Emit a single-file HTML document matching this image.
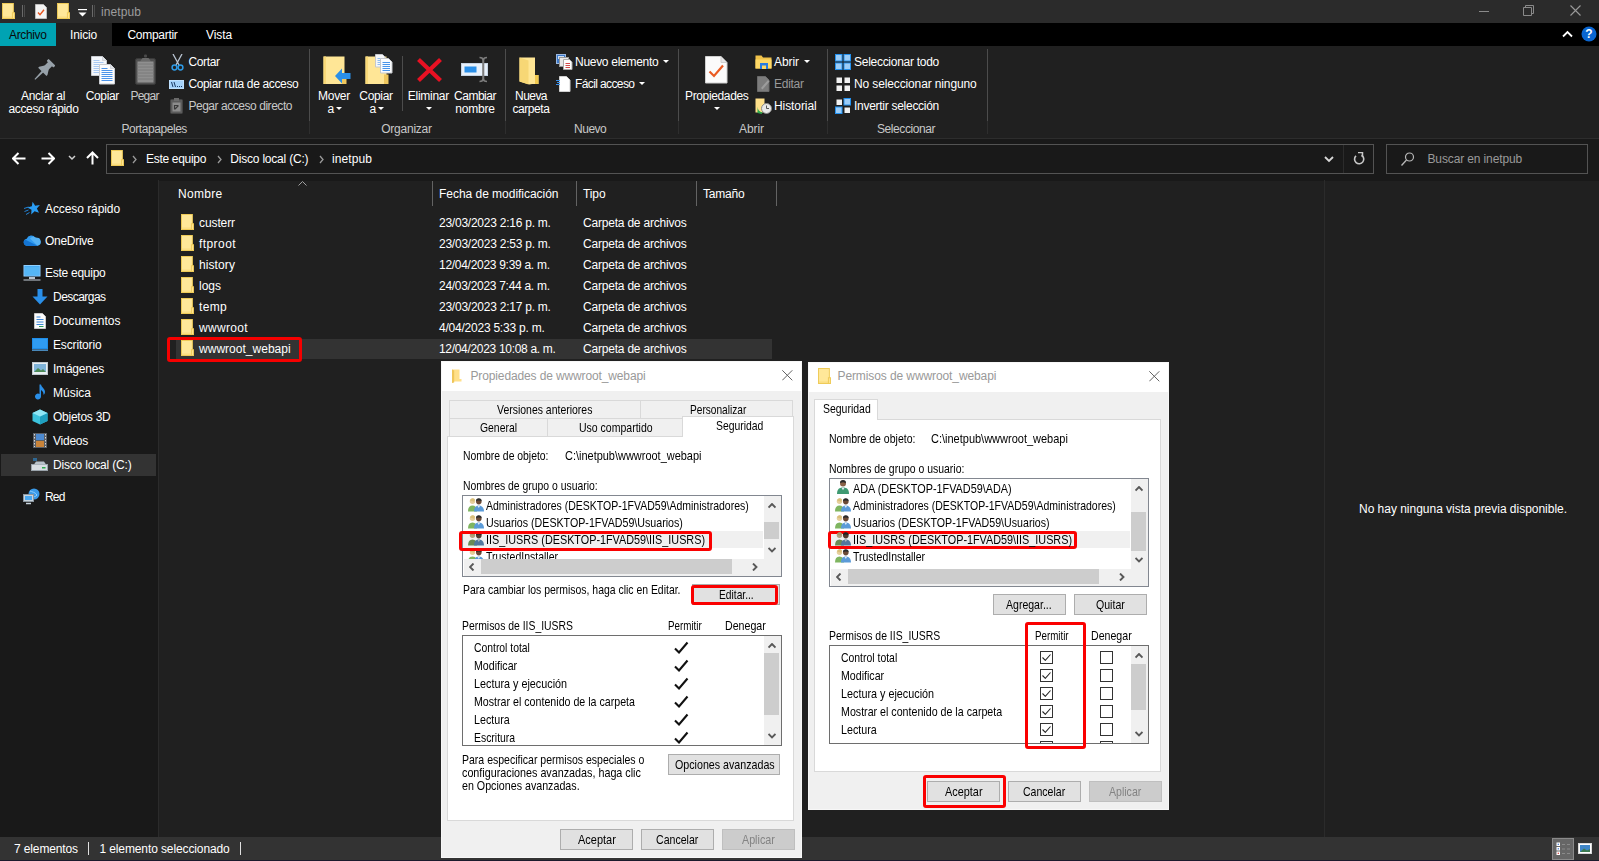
<!DOCTYPE html>
<html lang="es"><head><meta charset="utf-8"><title>inetpub</title>
<style>

html,body{margin:0;padding:0;background:#202020;}
body{width:1599px;height:861px;overflow:hidden;}
#root{position:relative;width:1599px;height:861px;overflow:hidden;background:#202020;
 font-family:"Liberation Sans",sans-serif;font-size:12px;color:#fff;}
.a{position:absolute;display:block;}
.t{white-space:pre;}

</style></head>
<body>
<div id="root">
<div class="a" style="left:0px;top:0px;width:1599px;height:23px;background:#2b2b2b;"></div>
<svg class="a" style="left:2px;top:3px;" width="13" height="16" viewBox="0 0 13.5 15.5" preserveAspectRatio="none"><path d="M0.500 0.500h11.300v14.500h-11.300z" fill="#ffe899" stroke="#efcb58"/><path d="M1 13h10.300v1.500h-10.300z" fill="#fbde84"/><path d="M10.800 9.500h2.200v5.500h-2.200z" fill="#ffe491" stroke="#efcb58"/></svg>
<div class="a" style="left:22px;top:5px;width:1px;height:12px;background:#6a6a6a;"></div>
<div class="a" style="left:24px;top:5px;width:1px;height:12px;background:#4a4a4a;"></div>
<svg class="a" style="left:35px;top:4px;" width="12" height="15" viewBox="0 0 12 15" preserveAspectRatio="none"><path d="M0.5 0.5h8l3 3v11h-11z" fill="#f4f4f4" stroke="#bdbdbd"/><path d="M3 8.5l2 2.2l4-5" fill="none" stroke="#e8541e" stroke-width="1.4"/></svg>
<svg class="a" style="left:57px;top:3px;" width="13" height="16" viewBox="0 0 13.5 15.5" preserveAspectRatio="none"><path d="M0.500 0.500h11.300v14.500h-11.300z" fill="#ffe899" stroke="#efcb58"/><path d="M1 13h10.300v1.500h-10.300z" fill="#fbde84"/><path d="M10.800 9.500h2.200v5.500h-2.200z" fill="#ffe491" stroke="#efcb58"/></svg>
<svg class="a" style="left:78px;top:9px;" width="9" height="8" viewBox="0 0 9 8" preserveAspectRatio="none"><path d="M0 0.5h9" stroke="#fff" stroke-width="1.4"/><path d="M0.5 3.5h8l-4 4z" fill="#fff"/></svg>
<div class="a" style="left:92px;top:5px;width:1px;height:12px;background:#6a6a6a;"></div>
<div class="a" style="left:94px;top:5px;width:1px;height:12px;background:#4a4a4a;"></div>
<span class="a t" style="left:101.00px;top:3.50px;line-height:16px;font-size:12px;color:#9d9d9d;letter-spacing:0.090px;">inetpub</span>
<div class="a" style="left:1479px;top:11px;width:10px;height:1px;background:#8a8a8a;"></div>
<svg class="a" style="left:1523px;top:5px;" width="11" height="11" viewBox="0 0 11 11" preserveAspectRatio="none"><path d="M0.5 2.5h8v8h-8z M2.5 2.5v-2h8v8h-2" fill="none" stroke="#8a8a8a"/></svg>
<svg class="a" style="left:1570px;top:5px;" width="11" height="11" viewBox="0 0 11 11" preserveAspectRatio="none"><path d="M0.5 0.5l10 10M10.5 0.5l-10 10" stroke="#9a9a9a" stroke-width="1.1"/></svg>
<div class="a" style="left:0px;top:23px;width:1599px;height:23px;background:#000;"></div>
<div class="a" style="left:0px;top:23px;width:56px;height:23px;background:#00a3b3;"></div>
<span class="a t" style="left:9.00px;top:26.50px;line-height:16px;font-size:12px;color:#0a0a0a;letter-spacing:-0.359px;">Archivo</span>
<div class="a" style="left:56px;top:23px;width:56px;height:24px;background:#202020;"></div>
<span class="a t" style="left:70.00px;top:26.50px;line-height:16px;font-size:12px;color:#fff;letter-spacing:-0.169px;">Inicio</span>
<span class="a t" style="left:127.50px;top:26.50px;line-height:16px;font-size:12px;color:#fff;letter-spacing:-0.297px;">Compartir</span>
<span class="a t" style="left:206.00px;top:26.50px;line-height:16px;font-size:12px;color:#fff;letter-spacing:-0.092px;">Vista</span>
<svg class="a" style="left:1562px;top:30px;" width="11" height="8" viewBox="0 0 11 8" preserveAspectRatio="none"><path d="M1 6.5l4.5-4.5l4.5 4.5" fill="none" stroke="#fff" stroke-width="1.8"/></svg>
<svg class="a" style="left:1581px;top:26px;" width="16" height="16" viewBox="0 0 16 16" preserveAspectRatio="none"><circle cx="8" cy="8" r="7.5" fill="#0a66d1"/><text x="8" y="12.3" text-anchor="middle" font-family="Liberation Sans, sans-serif" font-weight="bold" font-size="12" fill="#fff">?</text></svg>
<div class="a" style="left:0px;top:46px;width:1599px;height:92px;background:#202020;"></div>
<div class="a" style="left:0px;top:138px;width:1599px;height:1px;background:#2d2d2d;"></div>
<div class="a" style="left:309px;top:49px;width:1px;height:72px;background:#4c4c4c;"></div>
<div class="a" style="left:309px;top:121px;width:1px;height:13px;background:#2e2e2e;"></div>
<div class="a" style="left:505px;top:49px;width:1px;height:72px;background:#4c4c4c;"></div>
<div class="a" style="left:505px;top:121px;width:1px;height:13px;background:#2e2e2e;"></div>
<div class="a" style="left:678px;top:49px;width:1px;height:72px;background:#4c4c4c;"></div>
<div class="a" style="left:678px;top:121px;width:1px;height:13px;background:#2e2e2e;"></div>
<div class="a" style="left:827px;top:49px;width:1px;height:72px;background:#4c4c4c;"></div>
<div class="a" style="left:827px;top:121px;width:1px;height:13px;background:#2e2e2e;"></div>
<div class="a" style="left:987px;top:49px;width:1px;height:72px;background:#4c4c4c;"></div>
<div class="a" style="left:987px;top:121px;width:1px;height:13px;background:#2e2e2e;"></div>
<div class="a" style="left:402px;top:56px;width:1px;height:55px;background:#4c4c4c;"></div>
<svg class="a" style="left:30px;top:56px;" width="28" height="28" viewBox="0 0 28 28" preserveAspectRatio="none"><g fill="#98a2aa" transform="translate(13.900,14.300) rotate(45) scale(0.880)"><rect x="-5.500" y="-13" width="11" height="3.200" rx="1"/><rect x="-3.300" y="-10.500" width="6.600" height="8"/><path d="M-3.300 -4.500l-3.400 5.500v1.500h13.400v-1.500l-3.400-5.500z"/><path d="M-1.300 2h2.600l-0.700 12.500h-1.200z"/></g></svg>
<span class="a t" style="left:21.00px;top:88.00px;line-height:16px;font-size:12px;color:#fff;letter-spacing:-0.299px;">Anclar al</span>
<span class="a t" style="left:8.50px;top:101.00px;line-height:16px;font-size:12px;color:#fff;letter-spacing:-0.363px;">acceso rápido</span>
<svg class="a" style="left:91px;top:56px;" width="25" height="29" viewBox="0 0 25 29" preserveAspectRatio="none"><path d="M0.500 0.500h11l4 4v15h-15z" fill="#f4f7fb" stroke="#c9ccd1"/><path d="M11.500 0.500v4h4" fill="#dfe3e8" stroke="#c9ccd1" stroke-width="0.700"/><path d="M2.500 4.500h6M2.500 6.500h10M2.500 8.500h10M2.500 10.500h10M2.500 12.500h10M2.500 14.500h10M2.500 16.500h10" stroke="#a9c9f2" stroke-width="1"/><path d="M8.500 8.500h11l4 4v15.500h-15z" fill="#fcfdfe" stroke="#c9ccd1"/><path d="M19.500 8.500v4h4" fill="#dfe3e8" stroke="#c9ccd1" stroke-width="0.700"/><path d="M10.500 12.500h6M10.500 14.500h11M10.500 16.500h11M10.500 18.500h11M10.500 20.500h11M10.500 22.500h11M10.500 24.500h11" stroke="#4c94ea" stroke-width="1"/></svg>
<span class="a t" style="left:85.65px;top:88.00px;line-height:16px;font-size:12px;color:#fff;letter-spacing:-0.342px;">Copiar</span>
<svg class="a" style="left:135px;top:54px;" width="21" height="31" viewBox="0 0 21 31" preserveAspectRatio="none"><rect x="0.500" y="4.500" width="20" height="26" rx="1.800" fill="#505050" stroke="#3a3a3a"/><rect x="9" y="0.500" width="3" height="3" rx="1" fill="#4a4a4a"/><path d="M5 7.500l2.500-3.500h6l2.500 3.500z" fill="#6a6a6a"/><rect x="2.500" y="7.500" width="16" height="21" fill="#8f8f8f"/><path d="M2.500 10h16M2.500 13h16M2.500 16h16M2.500 19h16M2.500 22h16M2.500 25h16" stroke="#7b7b7b" stroke-width="1"/></svg>
<span class="a t" style="left:130.40px;top:88.00px;line-height:16px;font-size:12px;color:#c8c8c8;letter-spacing:-0.724px;">Pegar</span>
<svg class="a" style="left:171px;top:54px;" width="13" height="17" viewBox="0 0 13 17" preserveAspectRatio="none"><path d="M2 0l6 11M11 0l-6 11" stroke="#b9c4d2" stroke-width="1.3" fill="none"/><circle cx="3.500" cy="13.500" r="2.400" fill="none" stroke="#2e9be6" stroke-width="1.5"/><circle cx="9.500" cy="13.500" r="2.400" fill="none" stroke="#2e9be6" stroke-width="1.5"/></svg>
<span class="a t" style="left:188.40px;top:54.00px;line-height:16px;font-size:12px;color:#fff;letter-spacing:-0.340px;">Cortar</span>
<svg class="a" style="left:169px;top:80px;" width="15" height="9" viewBox="0 0 15 9" preserveAspectRatio="none"><rect x="0" y="0" width="15" height="9" fill="#bfe0ff"/><rect x="1" y="1" width="13" height="7" fill="#a5d2fb"/><path d="M2.500 2l1.500 5M5 2l1.500 5" stroke="#1b3b66" stroke-width="1"/><path d="M8 6.500h1M10 6.500h1M12 6.500h1" stroke="#1b3b66"/></svg>
<span class="a t" style="left:188.40px;top:76.00px;line-height:16px;font-size:12px;color:#fff;letter-spacing:-0.352px;">Copiar ruta de acceso</span>
<svg class="a" style="left:170px;top:98px;" width="13" height="16" viewBox="0 0 13 16" preserveAspectRatio="none"><rect x="0.5" y="1.500" width="12" height="14" rx="1" fill="#5b5b5b" stroke="#444"/><rect x="4" y="0" width="5" height="3" fill="#6a6a6a"/><rect x="2.500" y="4.500" width="8" height="9" fill="#8c8c8c"/><path d="M4.500 11.500v-4h4M8.500 7.500l-3.500 3.500" stroke="#3a3a3a" stroke-width="1.2" fill="none"/></svg>
<span class="a t" style="left:188.40px;top:98.00px;line-height:16px;font-size:12px;color:#c8c8c8;letter-spacing:-0.456px;">Pegar acceso directo</span>
<span class="a t" style="left:121.45px;top:121.00px;line-height:16px;font-size:12px;color:#c8c8c8;letter-spacing:-0.435px;">Portapapeles</span>
<svg class="a" style="left:323px;top:56px;" width="28" height="29" viewBox="0 0 28 29" preserveAspectRatio="none"><path d="M0.500 0.500h21v27.500h-21z" fill="#ffe696"/><path d="M0.500 0.500h2.500v27.500h-2.500z" fill="#f9d978"/><path d="M19 18.500h4.500v9.500h-4.500z" fill="#efc75e"/><path d="M12 17h8.500v-4.500l7 7.500l-7 7.500v-4.500h-8.500z" fill="#2a8fe8" transform="translate(39.500,0) scale(-1,1)"/></svg>
<span class="a t" style="left:318.00px;top:88.00px;line-height:16px;font-size:12px;color:#fff;letter-spacing:-0.268px;">Mover</span>
<span class="a t" style="left:327.50px;top:101.00px;line-height:16px;font-size:12px;color:#fff;">a</span>
<svg class="a" style="left:336px;top:107px;" width="6" height="3" viewBox="0 0 6 3" preserveAspectRatio="none"><path d="M0 0h6l-3 3z" fill="#fff"/></svg>
<svg class="a" style="left:365px;top:54px;" width="29" height="31" viewBox="0 0 29 31" preserveAspectRatio="none"><path d="M0.500 2.500h21v27.500h-21z" fill="#ffe696"/><path d="M0.500 2.500h2.500v27.500h-2.500z" fill="#f9d978"/><path d="M19 20.500h4.500v9.500h-4.500z" fill="#efc75e"/><path d="M10.500 0.500h7l2.500 2.500v10h-9.500z" fill="#f5f7fa" stroke="#c5c8cc"/><path d="M12.500 4.500h5M12.500 6.500h5M12.500 8.500h5M12.500 10.500h5" stroke="#8fbdf0"/><path d="M15.500 4.500h8l3.500 3.500v11h-11.500z" fill="#fbfcfe" stroke="#c5c8cc"/><path d="M17.500 8.500h7.500M17.500 10.500h7.500M17.500 12.500h7.500M17.500 14.500h7.500M17.500 16.500h7.500" stroke="#4a95ea"/></svg>
<span class="a t" style="left:359.35px;top:88.00px;line-height:16px;font-size:12px;color:#fff;letter-spacing:-0.342px;">Copiar</span>
<span class="a t" style="left:369.50px;top:101.00px;line-height:16px;font-size:12px;color:#fff;">a</span>
<svg class="a" style="left:378px;top:107px;" width="6" height="3" viewBox="0 0 6 3" preserveAspectRatio="none"><path d="M0 0h6l-3 3z" fill="#fff"/></svg>
<svg class="a" style="left:416px;top:57px;" width="27" height="26" viewBox="0 0 27 26" preserveAspectRatio="none"><path d="M2.500 2.500l22 21M24.500 2.500l-22 21" stroke="#e81123" stroke-width="4.200" fill="none"/></svg>
<span class="a t" style="left:407.80px;top:88.00px;line-height:16px;font-size:12px;color:#fff;letter-spacing:-0.268px;">Eliminar</span>
<svg class="a" style="left:425.5px;top:107px;" width="6" height="3" viewBox="0 0 6 3" preserveAspectRatio="none"><path d="M0 0h6l-3 3z" fill="#fff"/></svg>
<svg class="a" style="left:461px;top:56px;" width="30" height="28" viewBox="0 0 30 28" preserveAspectRatio="none"><rect x="0.500" y="7.500" width="26" height="12" fill="#e8f1fb" stroke="#c6d3e2"/><rect x="3.500" y="10.500" width="12" height="6" fill="#2a8fe8"/><path d="M18.500 1.500c2.500 0 3.500 1 3.500 2.500v19c0 1.500-1 2.500-3.500 2.500M26 1.500c-2.500 0-3.500 1-3.500 2.500v19c0 1.500 1 2.500 3.500 2.500" fill="none" stroke="#7c7c7c" stroke-width="1.600"/></svg>
<span class="a t" style="left:454.00px;top:88.00px;line-height:16px;font-size:12px;color:#fff;letter-spacing:-0.478px;">Cambiar</span>
<span class="a t" style="left:455.30px;top:101.00px;line-height:16px;font-size:12px;color:#fff;letter-spacing:-0.215px;">nombre</span>
<span class="a t" style="left:381.20px;top:121.00px;line-height:16px;font-size:12px;color:#c8c8c8;letter-spacing:-0.232px;">Organizar</span>
<svg class="a" style="left:519px;top:57px;" width="20" height="28" viewBox="0 0 20 28" preserveAspectRatio="none"><path d="M0.500 0.500h15.500v17.500h3.500v9h-6.500l-2.500 0.500l-10-3z" fill="#ffe695"/><path d="M0.500 0.500l9 3v24l-9-3z" fill="#f7d775"/><path d="M16 18h3.500v9h-3.500z" fill="#f2c94f"/></svg>
<span class="a t" style="left:515.00px;top:88.00px;line-height:16px;font-size:12px;color:#fff;letter-spacing:-0.537px;">Nueva</span>
<span class="a t" style="left:512.50px;top:101.00px;line-height:16px;font-size:12px;color:#fff;letter-spacing:-0.432px;">carpeta</span>
<svg class="a" style="left:556px;top:54px;" width="17" height="16" viewBox="0 0 17 16" preserveAspectRatio="none"><rect x="0.500" y="0.500" width="9" height="9" fill="#3c78c8" stroke="#9db9df"/><rect x="2" y="2" width="6" height="3" fill="#cfe0f5"/><rect x="3.500" y="3.500" width="9" height="9" fill="#e8e8e8" stroke="#999"/><path d="M7.500 5.500h6l2.500 2.500v7.500h-8.500z" fill="#fff" stroke="#aaa"/><path d="M9.500 9.500h4.500M9.500 11.500h4.500M9.500 13.500h4.500" stroke="#d24a4a"/></svg>
<span class="a t" style="left:575.00px;top:54.00px;line-height:16px;font-size:12px;color:#fff;letter-spacing:-0.285px;">Nuevo elemento</span>
<svg class="a" style="left:663px;top:60px;" width="6" height="3" viewBox="0 0 6 3" preserveAspectRatio="none"><path d="M0 0h6l-3 3z" fill="#fff"/></svg>
<svg class="a" style="left:556px;top:76px;" width="15" height="16" viewBox="0 0 15 16" preserveAspectRatio="none"><path d="M3.500 0.500h7l3.500 3.500v11.500h-10.500z" fill="#fff" stroke="#cfcfcf"/><path d="M0 4.500h4M1 6.500h3M0 8.500h4" stroke="#3a8ee6"/></svg>
<span class="a t" style="left:575.00px;top:76.00px;line-height:16px;font-size:12px;color:#fff;letter-spacing:-0.608px;">Fácil acceso</span>
<svg class="a" style="left:639px;top:82px;" width="6" height="3" viewBox="0 0 6 3" preserveAspectRatio="none"><path d="M0 0h6l-3 3z" fill="#fff"/></svg>
<span class="a t" style="left:574.10px;top:121.00px;line-height:16px;font-size:12px;color:#c8c8c8;letter-spacing:-0.497px;">Nuevo</span>
<svg class="a" style="left:705px;top:56px;" width="23" height="28" viewBox="0 0 23 28" preserveAspectRatio="none"><path d="M0.500 0.500h15.500l6 6v20.500h-21.500z" fill="#fbfbfb" stroke="#cfcfcf"/><path d="M16 0.500v6h6" fill="#e6e6e6" stroke="#cfcfcf"/><path d="M4.500 15.500l4.500 4.500l9-10.500" fill="none" stroke="#ea5b22" stroke-width="2.200"/></svg>
<span class="a t" style="left:685.00px;top:88.00px;line-height:16px;font-size:12px;color:#fff;letter-spacing:-0.362px;">Propiedades</span>
<svg class="a" style="left:713.5px;top:107px;" width="6" height="3" viewBox="0 0 6 3" preserveAspectRatio="none"><path d="M0 0h6l-3 3z" fill="#fff"/></svg>
<svg class="a" style="left:755px;top:55px;" width="17" height="14" viewBox="0 0 17 14" preserveAspectRatio="none"><path d="M0.500 0.500h6l1.500 2h8.500v11h-16z" fill="#f0c24a"/><path d="M0.500 4.500h16v9h-16z" fill="#ffd966"/><rect x="5" y="8" width="8" height="6" fill="#2a7de1"/><rect x="7" y="10.500" width="4" height="3.500" fill="#ffd966"/></svg>
<span class="a t" style="left:774.00px;top:54.00px;line-height:16px;font-size:12px;color:#fff;letter-spacing:-0.067px;">Abrir</span>
<svg class="a" style="left:804px;top:60px;" width="6" height="3" viewBox="0 0 6 3" preserveAspectRatio="none"><path d="M0 0h6l-3 3z" fill="#fff"/></svg>
<svg class="a" style="left:757px;top:76px;" width="13" height="16" viewBox="0 0 13 16" preserveAspectRatio="none"><path d="M0.500 0.500h8l3.500 3.500v11.500h-11.500z" fill="#7c7c7c" stroke="#6a6a6a"/><path d="M4 12l7-8l1.500 1.500l-7 8z" fill="#9c9c9c"/></svg>
<span class="a t" style="left:774.00px;top:76.00px;line-height:16px;font-size:12px;color:#9a9a9a;letter-spacing:-0.275px;">Editar</span>
<svg class="a" style="left:755px;top:98px;" width="17" height="16" viewBox="0 0 17 16" preserveAspectRatio="none"><path d="M0.500 0.500h9v14h-9z" fill="#ffe08a"/><circle cx="11.500" cy="10.500" r="5" fill="#e9e9e9" stroke="#8a8a8a"/><path d="M11.500 7.500v3h2.500" stroke="#555" fill="none"/><path d="M2.500 8.500c0 3 2 5.500 5 6l-1 1.500l-4-1z" fill="#2fa84f"/></svg>
<span class="a t" style="left:774.00px;top:98.00px;line-height:16px;font-size:12px;color:#fff;letter-spacing:-0.082px;">Historial</span>
<span class="a t" style="left:739.00px;top:121.00px;line-height:16px;font-size:12px;color:#c8c8c8;letter-spacing:-0.067px;">Abrir</span>
<svg class="a" style="left:835px;top:54px;" width="16" height="16" viewBox="0 0 16 16" preserveAspectRatio="none"><rect x="0.5" y="0.5" width="6.500" height="6.500" fill="#9ccdf8" stroke="#2492f0"/><rect x="9.0" y="0.5" width="6.500" height="6.500" fill="#9ccdf8" stroke="#2492f0"/><rect x="0.5" y="9.0" width="6.500" height="6.500" fill="#9ccdf8" stroke="#2492f0"/><rect x="9.0" y="9.0" width="6.500" height="6.500" fill="#9ccdf8" stroke="#2492f0"/></svg>
<span class="a t" style="left:854.00px;top:54.00px;line-height:16px;font-size:12px;color:#fff;letter-spacing:-0.274px;">Seleccionar todo</span>
<svg class="a" style="left:835px;top:76px;" width="16" height="16" viewBox="0 0 16 16" preserveAspectRatio="none"><rect x="1.5" y="1.5" width="5.500" height="5.500" fill="#f1f1f1"/><rect x="9.5" y="1.5" width="5.500" height="5.500" fill="#f1f1f1"/><rect x="1.5" y="9.5" width="5.500" height="5.500" fill="#f1f1f1"/><rect x="9.5" y="9.5" width="5.500" height="5.500" fill="#f1f1f1"/></svg>
<span class="a t" style="left:854.00px;top:76.00px;line-height:16px;font-size:12px;color:#fff;letter-spacing:-0.128px;">No seleccionar ninguno</span>
<svg class="a" style="left:835px;top:98px;" width="16" height="16" viewBox="0 0 16 16" preserveAspectRatio="none"><rect x="1.5" y="1.5" width="5.500" height="5.500" fill="#f1f1f1"/><rect x="9.0" y="0.5" width="6.500" height="6.500" fill="#9ccdf8" stroke="#2492f0"/><rect x="0.5" y="9.0" width="6.500" height="6.500" fill="#9ccdf8" stroke="#2492f0"/><rect x="9.5" y="9.5" width="5.500" height="5.500" fill="#f1f1f1"/></svg>
<span class="a t" style="left:854.00px;top:98.00px;line-height:16px;font-size:12px;color:#fff;letter-spacing:-0.280px;">Invertir selección</span>
<span class="a t" style="left:877.00px;top:121.00px;line-height:16px;font-size:12px;color:#c8c8c8;letter-spacing:-0.427px;">Seleccionar</span>
<div class="a" style="left:0px;top:139px;width:1599px;height:42px;background:#191919;"></div>
<svg class="a" style="left:12px;top:152px;" width="14" height="13" viewBox="0 0 14 13" preserveAspectRatio="none"><path d="M13.500 6.500h-12M6.500 1l-5.500 5.500l5.500 5.500" fill="none" stroke="#fff" stroke-width="2"/></svg>
<svg class="a" style="left:41px;top:152px;" width="14" height="13" viewBox="0 0 14 13" preserveAspectRatio="none"><path d="M0.500 6.500h12M7.500 1l5.500 5.500l-5.500 5.500" fill="none" stroke="#fff" stroke-width="2"/></svg>
<svg class="a" style="left:68px;top:155px;" width="8" height="6" viewBox="0 0 8 6" preserveAspectRatio="none"><path d="M1 1l3 3l3-3" fill="none" stroke="#d0d0d0" stroke-width="1.500"/></svg>
<svg class="a" style="left:86px;top:151px;" width="13" height="14" viewBox="0 0 13 14" preserveAspectRatio="none"><path d="M6.500 13.500v-12M1 7l5.500-5.500l5.500 5.500" fill="none" stroke="#fff" stroke-width="2"/></svg>
<div class="a" style="left:106px;top:144px;width:1268px;height:30px;background:#191919;border:1px solid #535353;box-sizing:border-box;"></div>
<svg class="a" style="left:111px;top:150px;" width="13" height="16" viewBox="0 0 13.5 15.5" preserveAspectRatio="none"><path d="M0.500 0.500h11.300v14.500h-11.300z" fill="#ffe899" stroke="#efcb58"/><path d="M1 13h10.300v1.500h-10.300z" fill="#fbde84"/><path d="M10.800 9.500h2.200v5.500h-2.200z" fill="#ffe491" stroke="#efcb58"/></svg>
<svg class="a" style="left:132px;top:155px;" width="6" height="9" viewBox="0 0 6 9" preserveAspectRatio="none"><path d="M1 1l3 3.500l-3 3.500" fill="none" stroke="#9a9a9a" stroke-width="1.300"/></svg>
<span class="a t" style="left:146.00px;top:150.50px;line-height:16px;font-size:12px;color:#fff;letter-spacing:-0.307px;">Este equipo</span>
<svg class="a" style="left:217px;top:155px;" width="6" height="9" viewBox="0 0 6 9" preserveAspectRatio="none"><path d="M1 1l3 3.500l-3 3.500" fill="none" stroke="#9a9a9a" stroke-width="1.300"/></svg>
<span class="a t" style="left:230.30px;top:150.50px;line-height:16px;font-size:12px;color:#fff;letter-spacing:-0.209px;">Disco local (C:)</span>
<svg class="a" style="left:319px;top:155px;" width="6" height="9" viewBox="0 0 6 9" preserveAspectRatio="none"><path d="M1 1l3 3.500l-3 3.500" fill="none" stroke="#9a9a9a" stroke-width="1.300"/></svg>
<span class="a t" style="left:332.00px;top:150.50px;line-height:16px;font-size:12px;color:#fff;letter-spacing:0.090px;">inetpub</span>
<svg class="a" style="left:1324px;top:156px;" width="10" height="7" viewBox="0 0 10 7" preserveAspectRatio="none"><path d="M1 1l4 4l4-4" fill="none" stroke="#d8d8d8" stroke-width="1.800"/></svg>
<div class="a" style="left:1343px;top:145px;width:1px;height:28px;background:#2b2b2b;"></div>
<svg class="a" style="left:1353px;top:152px;" width="12" height="14" viewBox="0 0 12 14" preserveAspectRatio="none"><path d="M8.500 3.200a4.600 4.600 0 1 1-5.500 0.600" fill="none" stroke="#c8c8c8" stroke-width="1.600"/><path d="M5 0.500h4.500v4.500" fill="none" stroke="#c8c8c8" stroke-width="1.500"/></svg>
<div class="a" style="left:1386px;top:144px;width:202px;height:30px;background:#191919;border:1px solid #535353;box-sizing:border-box;"></div>
<svg class="a" style="left:1401px;top:152px;" width="14" height="14" viewBox="0 0 14 14" preserveAspectRatio="none"><circle cx="8.500" cy="5" r="4" fill="none" stroke="#b8b8b8" stroke-width="1.200"/><path d="M5.500 8l-5 5.500" stroke="#b8b8b8" stroke-width="1.300"/></svg>
<span class="a t" style="left:1427.50px;top:150.50px;line-height:16px;font-size:12px;color:#9a9a9a;letter-spacing:-0.131px;">Buscar en inetpub</span>
<div class="a" style="left:0px;top:181px;width:158px;height:656px;background:#191919;"></div>
<div class="a" style="left:158px;top:180px;width:1px;height:657px;background:#2b2b2b;"></div>
<div class="a" style="left:1px;top:454px;width:155px;height:22px;background:#333333;"></div>
<svg class="a" style="left:23px;top:200px;" width="18" height="16" viewBox="0 0 18 16" preserveAspectRatio="none"><path d="M9.59 1.65L12.18 5.65L16.89 4.90L13.88 8.60L16.05 12.85L11.60 11.14L8.23 14.51L8.49 9.75L4.24 7.59L8.84 6.36z" fill="#2a9df4"/><path d="M1 8.500l4.500-1.500M1.500 11.500l4-1.500M3 14.500l3.500-2" stroke="#2383d6" stroke-width="1"/></svg>
<span class="a t" style="left:45.00px;top:200.50px;line-height:16px;font-size:12px;color:#fff;letter-spacing:-0.080px;">Acceso rápido</span>
<svg class="a" style="left:23px;top:235px;" width="18" height="12" viewBox="0 0 18 12" preserveAspectRatio="none"><path d="M4.300 11a3.700 3.700 0 0 1-0.600-7.300a4.800 4.800 0 0 1 8.700-0.900a3.900 3.900 0 0 1 1.300 8.200z" fill="#2f9af0"/><path d="M4.300 11a3.700 3.700 0 0 1-2.300-6.600l12.500 6.300l-0.800 0.300z" fill="#1474d2"/><path d="M7 3.500l7.500 7.200a3.900 3.900 0 0 0-1.400-7.900a4.800 4.800 0 0 0-6.100 0.700z" fill="#55b2f5"/></svg>
<span class="a t" style="left:45.00px;top:232.50px;line-height:16px;font-size:12px;color:#fff;letter-spacing:-0.273px;">OneDrive</span>
<svg class="a" style="left:23px;top:265px;" width="18" height="16" viewBox="0 0 18 16" preserveAspectRatio="none"><rect x="1" y="0.500" width="16" height="10.500" fill="#3aa0f0" stroke="#8fd0ff"/><rect x="2" y="1.500" width="14" height="8.500" fill="#55b6f5"/><path d="M6 12h6v2h-6z" fill="#b8c4cf"/><path d="M0.500 14.500h17v1h-17z" fill="#c8d2dc"/></svg>
<span class="a t" style="left:45.00px;top:264.50px;line-height:16px;font-size:12px;color:#fff;letter-spacing:-0.262px;">Este equipo</span>
<svg class="a" style="left:32px;top:289px;" width="16" height="16" viewBox="0 0 16 16" preserveAspectRatio="none"><path d="M5.500 0h5v7.500h5l-7.500 8l-7.500-8h5z" fill="#2a8fe8"/></svg>
<span class="a t" style="left:53.00px;top:288.50px;line-height:16px;font-size:12px;color:#fff;letter-spacing:-0.540px;">Descargas</span>
<svg class="a" style="left:34px;top:313px;" width="12" height="16" viewBox="0 0 12 16" preserveAspectRatio="none"><path d="M0.500 0.500h8l3 3v12h-11z" fill="#fbfbfb" stroke="#c8c8c8"/><path d="M2.500 4h4M2.500 6.500h7M2.500 9h7M2.500 11.500h7" stroke="#3a86d8"/><path d="M5 13.500h4.500" stroke="#2a9a5a"/></svg>
<span class="a t" style="left:53.00px;top:312.50px;line-height:16px;font-size:12px;color:#fff;letter-spacing:0.013px;">Documentos</span>
<svg class="a" style="left:32px;top:338px;" width="16" height="13" viewBox="0 0 16 13" preserveAspectRatio="none"><rect x="0" y="0" width="16" height="11" fill="#1f8de8"/><rect x="1" y="1" width="14" height="9" fill="#2f9cf2"/><rect x="0" y="11.500" width="16" height="1.200" fill="#5fb8ff"/></svg>
<span class="a t" style="left:53.00px;top:336.50px;line-height:16px;font-size:12px;color:#fff;letter-spacing:-0.151px;">Escritorio</span>
<svg class="a" style="left:32px;top:362px;" width="16" height="13" viewBox="0 0 16 13" preserveAspectRatio="none"><rect x="0.500" y="0.500" width="15" height="12" fill="#e8eef2" stroke="#c0c8ce"/><rect x="2" y="2" width="12" height="8" fill="#7fb3d9"/><path d="M2 10l4-4l3 2.500l2-1.500l3 3z" fill="#4d8a57"/></svg>
<span class="a t" style="left:53.00px;top:360.50px;line-height:16px;font-size:12px;color:#fff;letter-spacing:-0.212px;">Imágenes</span>
<svg class="a" style="left:35px;top:384px;" width="11" height="16" viewBox="0 0 11 16" preserveAspectRatio="none"><path d="M4.500 0.500h1.500c0.500 3 4 4 4 7.500c0 1.500-1 2.500-1.500 3c0.500-3-2-4.500-2.500-5v6.500a3 3 0 1 1-1.500-2.600z" fill="#2a8fe8"/></svg>
<span class="a t" style="left:53.00px;top:384.50px;line-height:16px;font-size:12px;color:#fff;">Música</span>
<svg class="a" style="left:32px;top:409px;" width="16" height="16" viewBox="0 0 16 16" preserveAspectRatio="none"><path d="M8 0.500l7.500 3.500v8l-7.500 3.500l-7.500-3.500v-8z" fill="#3cc3dd"/><path d="M8 7.500l7.500-3.500v8l-7.500 3.500z" fill="#1f9fbf"/><path d="M8 7.500l-7.500-3.500l7.500-3.500l7.500 3.500z" fill="#8fe6f5"/></svg>
<span class="a t" style="left:53.00px;top:408.50px;line-height:16px;font-size:12px;color:#fff;letter-spacing:-0.253px;">Objetos 3D</span>
<svg class="a" style="left:33px;top:433px;" width="14" height="15" viewBox="0 0 14 15" preserveAspectRatio="none"><rect x="0" y="0" width="14" height="15" fill="#5a5f66"/><rect x="3" y="1" width="8" height="6" fill="#4d8ad0"/><rect x="3" y="8" width="8" height="6" fill="#c9843a"/><path d="M1.500 1v13M12.500 1v13" stroke="#d8d8d8" stroke-dasharray="1.500 1.500"/></svg>
<span class="a t" style="left:53.00px;top:432.50px;line-height:16px;font-size:12px;color:#fff;letter-spacing:-0.246px;">Videos</span>
<svg class="a" style="left:31px;top:458px;" width="17" height="13" viewBox="0 0 17 13" preserveAspectRatio="none"><path d="M2 0h4M2 2h4" stroke="#2a9df4"/><rect x="0.500" y="6.500" width="16" height="6" fill="#d8dde2" stroke="#9aa3ab"/><path d="M3 6.500l2-3h8l2 3z" fill="#b9c2ca"/><rect x="11" y="9" width="3.500" height="1.500" fill="#2fa84f"/></svg>
<span class="a t" style="left:53.00px;top:456.50px;line-height:16px;font-size:12px;color:#fff;letter-spacing:-0.178px;">Disco local (C:)</span>
<svg class="a" style="left:23px;top:488px;" width="18" height="17" viewBox="0 0 18 17" preserveAspectRatio="none"><circle cx="11" cy="6" r="5.500" fill="#3a9ae8"/><path d="M7 3c2 1 5 1 7 4c-1 2-4 1-5 4" fill="none" stroke="#8fd0ff"/><rect x="0.500" y="6.500" width="10" height="7" fill="#c8d4de" stroke="#8a96a0"/><rect x="2" y="8" width="7" height="4" fill="#4aa8f0"/><path d="M3 15.500h5" stroke="#c8d4de" stroke-width="1.500"/></svg>
<span class="a t" style="left:45.00px;top:488.50px;line-height:16px;font-size:12px;color:#fff;letter-spacing:-0.838px;">Red</span>
<svg class="a" style="left:298px;top:181px;" width="9" height="5" viewBox="0 0 9 5" preserveAspectRatio="none"><path d="M0.500 4.500l4-4l4 4" fill="none" stroke="#a0a0a0" stroke-width="1"/></svg>
<span class="a t" style="left:178.00px;top:185.50px;line-height:16px;font-size:12px;color:#fff;letter-spacing:0.303px;">Nombre</span>
<div class="a" style="left:432px;top:181px;width:1px;height:25px;background:#636363;"></div>
<div class="a" style="left:576px;top:181px;width:1px;height:25px;background:#636363;"></div>
<div class="a" style="left:696px;top:181px;width:1px;height:25px;background:#636363;"></div>
<div class="a" style="left:776px;top:181px;width:1px;height:25px;background:#636363;"></div>
<span class="a t" style="left:439.00px;top:185.50px;line-height:16px;font-size:12px;color:#fff;letter-spacing:-0.027px;">Fecha de modificación</span>
<span class="a t" style="left:583.00px;top:185.50px;line-height:16px;font-size:12px;color:#fff;letter-spacing:-0.100px;">Tipo</span>
<span class="a t" style="left:703.00px;top:185.50px;line-height:16px;font-size:12px;color:#fff;letter-spacing:-0.199px;">Tamaño</span>
<div class="a" style="left:176px;top:339px;width:596px;height:20px;background:#333333;"></div>
<svg class="a" style="left:181px;top:214.0px;" width="13" height="16" viewBox="0 0 13.5 15.5" preserveAspectRatio="none"><path d="M0.500 0.500h11.300v14.500h-11.300z" fill="#ffe899" stroke="#efcb58"/><path d="M1 13h10.300v1.500h-10.300z" fill="#fbde84"/><path d="M10.800 9.500h2.200v5.500h-2.200z" fill="#ffe491" stroke="#efcb58"/></svg>
<span class="a t" style="left:199.00px;top:214.50px;line-height:16px;font-size:12px;color:#fff;letter-spacing:-0.096px;">custerr</span>
<span class="a t" style="left:439.00px;top:214.50px;line-height:16px;font-size:12px;color:#fff;letter-spacing:-0.241px;">23/03/2023 2:16 p. m.</span>
<span class="a t" style="left:583.00px;top:214.50px;line-height:16px;font-size:12px;color:#fff;letter-spacing:-0.205px;">Carpeta de archivos</span>
<svg class="a" style="left:181px;top:235.0px;" width="13" height="16" viewBox="0 0 13.5 15.5" preserveAspectRatio="none"><path d="M0.500 0.500h11.300v14.500h-11.300z" fill="#ffe899" stroke="#efcb58"/><path d="M1 13h10.300v1.500h-10.300z" fill="#fbde84"/><path d="M10.800 9.500h2.200v5.500h-2.200z" fill="#ffe491" stroke="#efcb58"/></svg>
<span class="a t" style="left:199.00px;top:235.50px;line-height:16px;font-size:12px;color:#fff;letter-spacing:0.426px;">ftproot</span>
<span class="a t" style="left:439.00px;top:235.50px;line-height:16px;font-size:12px;color:#fff;letter-spacing:-0.241px;">23/03/2023 2:53 p. m.</span>
<span class="a t" style="left:583.00px;top:235.50px;line-height:16px;font-size:12px;color:#fff;letter-spacing:-0.205px;">Carpeta de archivos</span>
<svg class="a" style="left:181px;top:256.0px;" width="13" height="16" viewBox="0 0 13.5 15.5" preserveAspectRatio="none"><path d="M0.500 0.500h11.300v14.500h-11.300z" fill="#ffe899" stroke="#efcb58"/><path d="M1 13h10.300v1.500h-10.300z" fill="#fbde84"/><path d="M10.800 9.500h2.200v5.500h-2.200z" fill="#ffe491" stroke="#efcb58"/></svg>
<span class="a t" style="left:199.00px;top:256.50px;line-height:16px;font-size:12px;color:#fff;letter-spacing:0.094px;">history</span>
<span class="a t" style="left:439.00px;top:256.50px;line-height:16px;font-size:12px;color:#fff;letter-spacing:-0.288px;">12/04/2023 9:39 a. m.</span>
<span class="a t" style="left:583.00px;top:256.50px;line-height:16px;font-size:12px;color:#fff;letter-spacing:-0.205px;">Carpeta de archivos</span>
<svg class="a" style="left:181px;top:277.0px;" width="13" height="16" viewBox="0 0 13.5 15.5" preserveAspectRatio="none"><path d="M0.500 0.500h11.300v14.500h-11.300z" fill="#ffe899" stroke="#efcb58"/><path d="M1 13h10.300v1.500h-10.300z" fill="#fbde84"/><path d="M10.800 9.500h2.200v5.500h-2.200z" fill="#ffe491" stroke="#efcb58"/></svg>
<span class="a t" style="left:199.00px;top:277.50px;line-height:16px;font-size:12px;color:#fff;">logs</span>
<span class="a t" style="left:439.00px;top:277.50px;line-height:16px;font-size:12px;color:#fff;letter-spacing:-0.288px;">24/03/2023 7:44 a. m.</span>
<span class="a t" style="left:583.00px;top:277.50px;line-height:16px;font-size:12px;color:#fff;letter-spacing:-0.205px;">Carpeta de archivos</span>
<svg class="a" style="left:181px;top:298.0px;" width="13" height="16" viewBox="0 0 13.5 15.5" preserveAspectRatio="none"><path d="M0.500 0.500h11.300v14.500h-11.300z" fill="#ffe899" stroke="#efcb58"/><path d="M1 13h10.300v1.500h-10.300z" fill="#fbde84"/><path d="M10.800 9.500h2.200v5.500h-2.200z" fill="#ffe491" stroke="#efcb58"/></svg>
<span class="a t" style="left:199.00px;top:298.50px;line-height:16px;font-size:12px;color:#fff;letter-spacing:0.331px;">temp</span>
<span class="a t" style="left:439.00px;top:298.50px;line-height:16px;font-size:12px;color:#fff;letter-spacing:-0.241px;">23/03/2023 2:17 p. m.</span>
<span class="a t" style="left:583.00px;top:298.50px;line-height:16px;font-size:12px;color:#fff;letter-spacing:-0.205px;">Carpeta de archivos</span>
<svg class="a" style="left:181px;top:319.0px;" width="13" height="16" viewBox="0 0 13.5 15.5" preserveAspectRatio="none"><path d="M0.500 0.500h11.300v14.500h-11.300z" fill="#ffe899" stroke="#efcb58"/><path d="M1 13h10.300v1.500h-10.300z" fill="#fbde84"/><path d="M10.800 9.500h2.200v5.500h-2.200z" fill="#ffe491" stroke="#efcb58"/></svg>
<span class="a t" style="left:199.00px;top:319.50px;line-height:16px;font-size:12px;color:#fff;letter-spacing:0.332px;">wwwroot</span>
<span class="a t" style="left:439.00px;top:319.50px;line-height:16px;font-size:12px;color:#fff;letter-spacing:-0.229px;">4/04/2023 5:33 p. m.</span>
<span class="a t" style="left:583.00px;top:319.50px;line-height:16px;font-size:12px;color:#fff;letter-spacing:-0.205px;">Carpeta de archivos</span>
<svg class="a" style="left:181px;top:340.0px;" width="13" height="16" viewBox="0 0 13.5 15.5" preserveAspectRatio="none"><path d="M0.500 0.500h11.300v14.500h-11.300z" fill="#ffe899" stroke="#efcb58"/><path d="M1 13h10.300v1.500h-10.300z" fill="#fbde84"/><path d="M10.800 9.500h2.200v5.500h-2.200z" fill="#ffe491" stroke="#efcb58"/></svg>
<span class="a t" style="left:199.00px;top:340.50px;line-height:16px;font-size:12px;color:#fff;letter-spacing:0.023px;">wwwroot_webapi</span>
<span class="a t" style="left:439.00px;top:340.50px;line-height:16px;font-size:12px;color:#fff;letter-spacing:-0.315px;">12/04/2023 10:08 a. m.</span>
<span class="a t" style="left:583.00px;top:340.50px;line-height:16px;font-size:12px;color:#fff;letter-spacing:-0.205px;">Carpeta de archivos</span>
<div class="a" style="left:167px;top:337px;width:135px;height:25px;border:3px solid #f60000;box-sizing:border-box;border-radius:3px;"></div>
<div class="a" style="left:1324px;top:180px;width:1px;height:657px;background:#2b2b2b;"></div>
<span class="a t" style="left:1359.00px;top:500.50px;line-height:16px;font-size:12px;color:#fff;letter-spacing:-0.020px;">No hay ninguna vista previa disponible.</span>
<div class="a" style="left:0px;top:837px;width:1599px;height:24px;background:#333333;"></div>
<div class="a" style="left:0px;top:860px;width:1599px;height:1px;background:#1b1b2c;"></div>
<span class="a t" style="left:14.00px;top:840.50px;line-height:16px;font-size:12px;color:#fff;letter-spacing:-0.125px;">7 elementos</span>
<div class="a" style="left:88px;top:842px;width:1px;height:13px;background:#e0e0e0;"></div>
<span class="a t" style="left:99.40px;top:840.50px;line-height:16px;font-size:12px;color:#fff;letter-spacing:-0.107px;">1 elemento seleccionado</span>
<div class="a" style="left:240px;top:842px;width:1px;height:13px;background:#e0e0e0;"></div>
<div class="a" style="left:1552px;top:838px;width:22px;height:22px;background:#666666;border:1px solid #8a8a8a;box-sizing:border-box;"></div>
<svg class="a" style="left:1556px;top:842px;" width="15" height="14" viewBox="0 0 15 14" preserveAspectRatio="none"><rect x="0.500" y="0.500" width="3.500" height="3.500" fill="#fff"/><rect x="0.500" y="5" width="3.500" height="3.500" fill="#fff"/><rect x="0.500" y="9.500" width="3.500" height="3.500" fill="#fff"/><rect x="1.700" y="1.700" width="1.200" height="1.200" fill="#2a6ad0"/><rect x="1.700" y="6.200" width="1.200" height="1.200" fill="#2a6ad0"/><rect x="1.700" y="10.700" width="1.200" height="1.200" fill="#d02a2a"/><path d="M6 2.500h3M11 2.500h3M6 7h3M11 7h3M6 11.500h3M11 11.500h3" stroke="#8a8a8a"/></svg>
<svg class="a" style="left:1578px;top:843px;" width="14" height="11" viewBox="0 0 14 11" preserveAspectRatio="none"><rect x="0.500" y="0.500" width="13" height="10" fill="#fff" stroke="#d8d8d8"/><rect x="2" y="2" width="10" height="7" fill="#3f86c8"/><path d="M2 9l4-3.500l3 2l3-1.500v3z" fill="#3c7a50"/></svg>
<div class="a" style="left:441px;top:361px;width:361px;height:497px;background:#f0f0f0;border:1px solid #f7f7f7;box-sizing:border-box;"></div>
<div class="a" style="left:442px;top:362px;width:359px;height:29px;background:#ffffff;"></div>
<span class="a t" style="left:470.50px;top:367.84px;line-height:16px;font-size:12px;color:#999999;letter-spacing:-0.130px;">Propiedades de wwwroot_webapi</span>
<svg class="a" style="left:782px;top:370px;" width="11" height="11" viewBox="0 0 11 11" preserveAspectRatio="none"><path d="M0.300 0.300l10 10M10.300 0.300l-10 10" stroke="#626262" stroke-width="1"/></svg>
<svg class="a" style="left:451px;top:369px;" width="11" height="14" viewBox="0 0 11 14" preserveAspectRatio="none"><path d="M1 0.500h7.500v9.500h2v2.500h-7l-2.500 1z" fill="#ffe08a"/><path d="M1 0.500l2.200 1v12l-2.200 0.500z" fill="#efc65a"/></svg>
<div class="a" style="left:449px;top:400px;width:192px;height:19px;background:#f0f0f0;border:1px solid #d9d9d9;box-sizing:border-box;"></div>
<div class="a" style="left:640px;top:400px;width:153px;height:19px;background:#f0f0f0;border:1px solid #d9d9d9;box-sizing:border-box;"></div>
<div class="a" style="left:449px;top:418px;width:99px;height:19px;background:#f0f0f0;border:1px solid #d9d9d9;box-sizing:border-box;"></div>
<div class="a" style="left:547px;top:418px;width:136px;height:19px;background:#f0f0f0;border:1px solid #d9d9d9;box-sizing:border-box;"></div>
<span class="a t" style="left:497.00px;top:401.50px;line-height:16px;font-size:13px;color:#000;transform:scaleX(0.8049);transform-origin:0 0;">Versiones anteriores</span>
<span class="a t" style="left:689.70px;top:401.50px;line-height:16px;font-size:13px;color:#000;transform:scaleX(0.7791);transform-origin:0 0;">Personalizar</span>
<span class="a t" style="left:480.00px;top:419.50px;line-height:16px;font-size:13px;color:#000;transform:scaleX(0.8000);transform-origin:0 0;">General</span>
<span class="a t" style="left:579.40px;top:419.50px;line-height:16px;font-size:13px;color:#000;transform:scaleX(0.8084);transform-origin:0 0;">Uso compartido</span>
<div class="a" style="left:447px;top:436px;width:347px;height:385px;background:#ffffff;border:1px solid #d9d9d9;box-sizing:border-box;"></div>
<div class="a" style="left:682px;top:416px;width:112px;height:21px;background:#ffffff;border:1px solid #d9d9d9;box-sizing:border-box;border-bottom:none;"></div>
<span class="a t" style="left:716.00px;top:417.50px;line-height:16px;font-size:13px;color:#000;transform:scaleX(0.7997);transform-origin:0 0;">Seguridad</span>
<span class="a t" style="left:462.80px;top:447.50px;line-height:16px;font-size:13px;color:#000;transform:scaleX(0.7994);transform-origin:0 0;">Nombre de objeto:</span>
<span class="a t" style="left:565.00px;top:447.50px;line-height:16px;font-size:13px;color:#000;transform:scaleX(0.8432);transform-origin:0 0;">C:\inetpub\wwwroot_webapi</span>
<span class="a t" style="left:462.80px;top:477.50px;line-height:16px;font-size:13px;color:#000;transform:scaleX(0.8000);transform-origin:0 0;">Nombres de grupo o usuario:</span>
<div class="a" style="left:462px;top:495px;width:320px;height:82px;background:#ffffff;border:1px solid #828790;box-sizing:border-box;"></div>
<div class="a" style="left:463px;top:531px;width:300px;height:17px;background:#f0f0f0;"></div>
<div class="a" style="left:463px;top:496px;width:301px;height:63px;overflow:hidden;">
<svg class="a" style="left:5px;top:2px;" width="16" height="14" viewBox="0 0 16 14" preserveAspectRatio="none"><circle cx="4.500" cy="3.200" r="2.700" fill="#e6cf9c"/><path d="M2 2.500a2.700 2.700 0 0 1 5-0.800l-1 2z" fill="#d9bf7a"/><path d="M0 13.500c0-4 1.500-6 4.500-6s4.500 2 4.500 6z" fill="#7fb560"/><circle cx="10.800" cy="3.600" r="2.800" fill="#6b4a36"/><path d="M8 3a2.800 2.800 0 0 1 5.600 0l-2.800-0.600z" fill="#2b2b2b"/><path d="M6 13.500c0-4 1.800-6 4.800-6s5.200 2 5.200 6z" fill="#5b9bd8"/><path d="M9.500 7.800l1.300 2.200l1.300-2.200z" fill="#e8f0f8"/></svg>
<span class="a t" style="left:22.80px;top:1.50px;line-height:16px;font-size:13px;color:#000;transform:scaleX(0.8077);transform-origin:0 0;">Administradores (DESKTOP-1FVAD59\Administradores)</span>
<svg class="a" style="left:5px;top:19px;" width="16" height="14" viewBox="0 0 16 14" preserveAspectRatio="none"><circle cx="4.500" cy="3.200" r="2.700" fill="#e6cf9c"/><path d="M2 2.500a2.700 2.700 0 0 1 5-0.800l-1 2z" fill="#d9bf7a"/><path d="M0 13.500c0-4 1.500-6 4.500-6s4.500 2 4.500 6z" fill="#7fb560"/><circle cx="10.800" cy="3.600" r="2.800" fill="#6b4a36"/><path d="M8 3a2.800 2.800 0 0 1 5.600 0l-2.800-0.600z" fill="#2b2b2b"/><path d="M6 13.500c0-4 1.800-6 4.800-6s5.200 2 5.200 6z" fill="#5b9bd8"/><path d="M9.500 7.800l1.300 2.200l1.300-2.200z" fill="#e8f0f8"/></svg>
<span class="a t" style="left:22.80px;top:18.50px;line-height:16px;font-size:13px;color:#000;transform:scaleX(0.8201);transform-origin:0 0;">Usuarios (DESKTOP-1FVAD59\Usuarios)</span>
<svg class="a" style="left:5px;top:36px;filter:brightness(0.78) saturate(0.8);" width="16" height="14" viewBox="0 0 16 14" preserveAspectRatio="none"><circle cx="4.500" cy="3.200" r="2.700" fill="#e6cf9c"/><path d="M2 2.500a2.700 2.700 0 0 1 5-0.800l-1 2z" fill="#d9bf7a"/><path d="M0 13.500c0-4 1.500-6 4.500-6s4.500 2 4.500 6z" fill="#7fb560"/><circle cx="10.800" cy="3.600" r="2.800" fill="#6b4a36"/><path d="M8 3a2.800 2.800 0 0 1 5.600 0l-2.800-0.600z" fill="#2b2b2b"/><path d="M6 13.500c0-4 1.800-6 4.800-6s5.200 2 5.200 6z" fill="#5b9bd8"/><path d="M9.500 7.800l1.300 2.200l1.300-2.200z" fill="#e8f0f8"/></svg>
<span class="a t" style="left:22.80px;top:35.50px;line-height:16px;font-size:13px;color:#000;transform:scaleX(0.8320);transform-origin:0 0;">IIS_IUSRS (DESKTOP-1FVAD59\IIS_IUSRS)</span>
<svg class="a" style="left:5px;top:53px;" width="16" height="14" viewBox="0 0 16 14" preserveAspectRatio="none"><circle cx="4.500" cy="3.200" r="2.700" fill="#e6cf9c"/><path d="M2 2.500a2.700 2.700 0 0 1 5-0.800l-1 2z" fill="#d9bf7a"/><path d="M0 13.500c0-4 1.500-6 4.500-6s4.500 2 4.500 6z" fill="#7fb560"/><circle cx="10.800" cy="3.600" r="2.800" fill="#6b4a36"/><path d="M8 3a2.800 2.800 0 0 1 5.600 0l-2.800-0.600z" fill="#2b2b2b"/><path d="M6 13.500c0-4 1.800-6 4.800-6s5.200 2 5.200 6z" fill="#5b9bd8"/><path d="M9.500 7.800l1.300 2.200l1.300-2.200z" fill="#e8f0f8"/></svg>
<span class="a t" style="left:22.80px;top:52.50px;line-height:16px;font-size:13px;color:#000;transform:scaleX(0.8080);transform-origin:0 0;">TrustedInstaller</span>
</div>
<div class="a" style="left:764px;top:496px;width:17px;height:63px;background:#f0f0f0;"></div>
<svg class="a" style="left:767.5px;top:502.5px;" width="8" height="6" viewBox="0 0 8 6" preserveAspectRatio="none"><path d="M0.500 4.500l3.500-3.500l3.500 3.500" fill="none" stroke="#585858" stroke-width="1.900"/></svg>
<svg class="a" style="left:767.5px;top:547px;" width="8" height="6" viewBox="0 0 8 6" preserveAspectRatio="none"><path d="M0.500 1l3.500 3.500l3.500-3.500" fill="none" stroke="#585858" stroke-width="1.900"/></svg>
<div class="a" style="left:764px;top:522px;width:15px;height:16.5px;background:#cdcdcd;"></div>
<div class="a" style="left:464px;top:559px;width:300px;height:17px;background:#f0f0f0;"></div>
<svg class="a" style="left:469px;top:562.5px;" width="6" height="8" viewBox="0 0 6 8" preserveAspectRatio="none"><path d="M4.500 0.500l-3.500 3.500l3.500 3.500" fill="none" stroke="#585858" stroke-width="1.900"/></svg>
<svg class="a" style="left:752px;top:562.5px;" width="6" height="8" viewBox="0 0 6 8" preserveAspectRatio="none"><path d="M1 0.500l3.500 3.500l-3.500 3.500" fill="none" stroke="#585858" stroke-width="1.900"/></svg>
<div class="a" style="left:481px;top:559px;width:251px;height:15px;background:#cdcdcd;"></div>
<div class="a" style="left:764px;top:559px;width:17px;height:17px;background:#f0f0f0;"></div>
<div class="a" style="left:459px;top:531px;width:253px;height:20px;border:3px solid #fa0000;box-sizing:border-box;border-radius:3px;"></div>
<span class="a t" style="left:462.80px;top:581.50px;line-height:16px;font-size:13px;color:#000;transform:scaleX(0.8027);transform-origin:0 0;">Para cambiar los permisos, haga clic en Editar.</span>
<div class="a" style="left:692px;top:584px;width:88px;height:21px;background:#e1e1e1;border:1px solid #adadad;box-sizing:border-box;"></div>
<span class="a t" style="left:718.60px;top:586.50px;line-height:16px;font-size:13px;color:#000;transform:scaleX(0.7872);transform-origin:0 0;">Editar...</span>
<div class="a" style="left:691px;top:585px;width:87px;height:20px;border:3px solid #fa0000;box-sizing:border-box;border-radius:3px;"></div>
<span class="a t" style="left:462.40px;top:617.50px;line-height:16px;font-size:13px;color:#000;transform:scaleX(0.8002);transform-origin:0 0;">Permisos de IIS_IUSRS</span>
<span class="a t" style="left:667.70px;top:617.50px;line-height:16px;font-size:13px;color:#000;transform:scaleX(0.7526);transform-origin:0 0;">Permitir</span>
<span class="a t" style="left:724.60px;top:617.50px;line-height:16px;font-size:13px;color:#000;transform:scaleX(0.8181);transform-origin:0 0;">Denegar</span>
<div class="a" style="left:462px;top:635px;width:320px;height:111px;background:#ffffff;border:1px solid #6e6e6e;box-sizing:border-box;"></div>
<span class="a t" style="left:474.30px;top:639.50px;line-height:16px;font-size:13px;color:#000;transform:scaleX(0.7975);transform-origin:0 0;">Control total</span>
<svg class="a" style="left:674px;top:641px;" width="15" height="13" viewBox="0 0 15 13" preserveAspectRatio="none"><path d="M1 7.500l4 4l8.500-10" fill="none" stroke="#111" stroke-width="2.100"/></svg>
<span class="a t" style="left:474.30px;top:657.50px;line-height:16px;font-size:13px;color:#000;transform:scaleX(0.8172);transform-origin:0 0;">Modificar</span>
<svg class="a" style="left:674px;top:659px;" width="15" height="13" viewBox="0 0 15 13" preserveAspectRatio="none"><path d="M1 7.500l4 4l8.500-10" fill="none" stroke="#111" stroke-width="2.100"/></svg>
<span class="a t" style="left:474.30px;top:675.50px;line-height:16px;font-size:13px;color:#000;transform:scaleX(0.8311);transform-origin:0 0;">Lectura y ejecución</span>
<svg class="a" style="left:674px;top:677px;" width="15" height="13" viewBox="0 0 15 13" preserveAspectRatio="none"><path d="M1 7.500l4 4l8.500-10" fill="none" stroke="#111" stroke-width="2.100"/></svg>
<span class="a t" style="left:474.30px;top:693.50px;line-height:16px;font-size:13px;color:#000;transform:scaleX(0.8191);transform-origin:0 0;">Mostrar el contenido de la carpeta</span>
<svg class="a" style="left:674px;top:695px;" width="15" height="13" viewBox="0 0 15 13" preserveAspectRatio="none"><path d="M1 7.500l4 4l8.500-10" fill="none" stroke="#111" stroke-width="2.100"/></svg>
<span class="a t" style="left:474.30px;top:711.50px;line-height:16px;font-size:13px;color:#000;transform:scaleX(0.8233);transform-origin:0 0;">Lectura</span>
<svg class="a" style="left:674px;top:713px;" width="15" height="13" viewBox="0 0 15 13" preserveAspectRatio="none"><path d="M1 7.500l4 4l8.500-10" fill="none" stroke="#111" stroke-width="2.100"/></svg>
<span class="a t" style="left:474.30px;top:729.50px;line-height:16px;font-size:13px;color:#000;transform:scaleX(0.8013);transform-origin:0 0;">Escritura</span>
<svg class="a" style="left:674px;top:731px;" width="15" height="13" viewBox="0 0 15 13" preserveAspectRatio="none"><path d="M1 7.500l4 4l8.500-10" fill="none" stroke="#111" stroke-width="2.100"/></svg>
<div class="a" style="left:764px;top:636px;width:17px;height:109px;background:#f0f0f0;"></div>
<svg class="a" style="left:767.5px;top:642.5px;" width="8" height="6" viewBox="0 0 8 6" preserveAspectRatio="none"><path d="M0.500 4.500l3.500-3.500l3.500 3.500" fill="none" stroke="#585858" stroke-width="1.900"/></svg>
<svg class="a" style="left:767.5px;top:733px;" width="8" height="6" viewBox="0 0 8 6" preserveAspectRatio="none"><path d="M0.500 1l3.500 3.500l3.500-3.500" fill="none" stroke="#585858" stroke-width="1.900"/></svg>
<div class="a" style="left:764px;top:653px;width:15px;height:62px;background:#cdcdcd;"></div>
<span class="a t" style="left:462.40px;top:751.50px;line-height:16px;font-size:13px;color:#000;transform:scaleX(0.8091);transform-origin:0 0;">Para especificar permisos especiales o</span>
<span class="a t" style="left:462.40px;top:764.50px;line-height:16px;font-size:13px;color:#000;transform:scaleX(0.8279);transform-origin:0 0;">configuraciones avanzadas, haga clic</span>
<span class="a t" style="left:462.40px;top:777.50px;line-height:16px;font-size:13px;color:#000;transform:scaleX(0.8218);transform-origin:0 0;">en Opciones avanzadas.</span>
<div class="a" style="left:668px;top:754px;width:112px;height:21px;background:#e1e1e1;border:1px solid #adadad;box-sizing:border-box;"></div>
<span class="a t" style="left:674.60px;top:756.50px;line-height:16px;font-size:13px;color:#000;transform:scaleX(0.8211);transform-origin:0 0;">Opciones avanzadas</span>
<div class="a" style="left:560px;top:829px;width:73px;height:21px;background:#e1e1e1;border:1px solid #adadad;box-sizing:border-box;"></div>
<span class="a t" style="left:577.90px;top:831.50px;line-height:16px;font-size:13px;color:#000;transform:scaleX(0.8437);transform-origin:0 0;">Aceptar</span>
<div class="a" style="left:641px;top:829px;width:73px;height:21px;background:#e1e1e1;border:1px solid #adadad;box-sizing:border-box;"></div>
<span class="a t" style="left:656.00px;top:831.50px;line-height:16px;font-size:13px;color:#000;transform:scaleX(0.8149);transform-origin:0 0;">Cancelar</span>
<div class="a" style="left:722px;top:829px;width:73px;height:21px;background:#cccccc;border:1px solid #bfbfbf;box-sizing:border-box;"></div>
<span class="a t" style="left:741.50px;top:831.50px;line-height:16px;font-size:13px;color:#838383;transform:scaleX(0.8254);transform-origin:0 0;">Aplicar</span>
<div class="a" style="left:808px;top:362px;width:361px;height:448px;background:#f0f0f0;border:1px solid #f7f7f7;box-sizing:border-box;"></div>
<div class="a" style="left:809px;top:363px;width:359px;height:29px;background:#ffffff;"></div>
<span class="a t" style="left:837.50px;top:368.34px;line-height:16px;font-size:12px;color:#999999;letter-spacing:-0.100px;">Permisos de wwwroot_webapi</span>
<svg class="a" style="left:1149px;top:371px;" width="11" height="11" viewBox="0 0 11 11" preserveAspectRatio="none"><path d="M0.300 0.300l10 10M10.300 0.300l-10 10" stroke="#626262" stroke-width="1"/></svg>
<svg class="a" style="left:818px;top:368px;" width="13" height="16" viewBox="0 0 13.5 15.5" preserveAspectRatio="none"><path d="M0.500 0.500h11.300v14.500h-11.300z" fill="#ffe899" stroke="#efcb58"/><path d="M1 13h10.300v1.500h-10.300z" fill="#fbde84"/><path d="M10.800 9.500h2.200v5.500h-2.200z" fill="#ffe491" stroke="#efcb58"/></svg>
<div class="a" style="left:814px;top:419px;width:347px;height:353px;background:#ffffff;border:1px solid #d9d9d9;box-sizing:border-box;"></div>
<div class="a" style="left:814px;top:399px;width:64px;height:21px;background:#ffffff;border:1px solid #d9d9d9;box-sizing:border-box;border-bottom:none;"></div>
<span class="a t" style="left:822.70px;top:400.50px;line-height:16px;font-size:13px;color:#000;transform:scaleX(0.8048);transform-origin:0 0;">Seguridad</span>
<span class="a t" style="left:829.30px;top:430.50px;line-height:16px;font-size:13px;color:#000;transform:scaleX(0.8078);transform-origin:0 0;">Nombre de objeto:</span>
<span class="a t" style="left:931.40px;top:430.50px;line-height:16px;font-size:13px;color:#000;transform:scaleX(0.8457);transform-origin:0 0;">C:\inetpub\wwwroot_webapi</span>
<span class="a t" style="left:829.30px;top:460.50px;line-height:16px;font-size:13px;color:#000;transform:scaleX(0.8041);transform-origin:0 0;">Nombres de grupo o usuario:</span>
<div class="a" style="left:829px;top:478px;width:320px;height:109px;background:#ffffff;border:1px solid #828790;box-sizing:border-box;"></div>
<div class="a" style="left:830px;top:531px;width:300px;height:17px;background:#f0f0f0;"></div>
<div class="a" style="left:828px;top:531px;width:249px;height:18px;border:3px solid #fa0000;box-sizing:border-box;border-radius:3px;"></div>
<svg class="a" style="left:836px;top:480px;" width="14" height="14" viewBox="0 0 14 14" preserveAspectRatio="none"><circle cx="7" cy="3.500" r="3" fill="#8a6248"/><path d="M4 3a3 3 0 0 1 6 0l-3-0.800z" fill="#2b2b2b"/><path d="M1 14c0-4.500 2-6.500 6-6.500s6 2 6 6.500z" fill="#3f9a72"/><path d="M5.500 7.800l1.500 2.500l1.500-2.500z" fill="#e8f0f8"/></svg>
<span class="a t" style="left:852.90px;top:480.50px;line-height:16px;font-size:13px;color:#000;transform:scaleX(0.8337);transform-origin:0 0;">ADA (DESKTOP-1FVAD59\ADA)</span>
<svg class="a" style="left:835px;top:498px;" width="16" height="14" viewBox="0 0 16 14" preserveAspectRatio="none"><circle cx="4.500" cy="3.200" r="2.700" fill="#e6cf9c"/><path d="M2 2.500a2.700 2.700 0 0 1 5-0.800l-1 2z" fill="#d9bf7a"/><path d="M0 13.500c0-4 1.500-6 4.500-6s4.500 2 4.500 6z" fill="#7fb560"/><circle cx="10.800" cy="3.600" r="2.800" fill="#6b4a36"/><path d="M8 3a2.800 2.800 0 0 1 5.600 0l-2.800-0.600z" fill="#2b2b2b"/><path d="M6 13.500c0-4 1.800-6 4.800-6s5.200 2 5.200 6z" fill="#5b9bd8"/><path d="M9.500 7.800l1.300 2.200l1.300-2.200z" fill="#e8f0f8"/></svg>
<span class="a t" style="left:852.90px;top:497.50px;line-height:16px;font-size:13px;color:#000;transform:scaleX(0.8077);transform-origin:0 0;">Administradores (DESKTOP-1FVAD59\Administradores)</span>
<svg class="a" style="left:835px;top:515px;" width="16" height="14" viewBox="0 0 16 14" preserveAspectRatio="none"><circle cx="4.500" cy="3.200" r="2.700" fill="#e6cf9c"/><path d="M2 2.500a2.700 2.700 0 0 1 5-0.800l-1 2z" fill="#d9bf7a"/><path d="M0 13.500c0-4 1.500-6 4.500-6s4.500 2 4.500 6z" fill="#7fb560"/><circle cx="10.800" cy="3.600" r="2.800" fill="#6b4a36"/><path d="M8 3a2.800 2.800 0 0 1 5.600 0l-2.800-0.600z" fill="#2b2b2b"/><path d="M6 13.500c0-4 1.800-6 4.800-6s5.200 2 5.200 6z" fill="#5b9bd8"/><path d="M9.500 7.800l1.300 2.200l1.300-2.200z" fill="#e8f0f8"/></svg>
<span class="a t" style="left:852.90px;top:514.50px;line-height:16px;font-size:13px;color:#000;transform:scaleX(0.8188);transform-origin:0 0;">Usuarios (DESKTOP-1FVAD59\Usuarios)</span>
<svg class="a" style="left:835px;top:532px;filter:brightness(0.78) saturate(0.8);" width="16" height="14" viewBox="0 0 16 14" preserveAspectRatio="none"><circle cx="4.500" cy="3.200" r="2.700" fill="#e6cf9c"/><path d="M2 2.500a2.700 2.700 0 0 1 5-0.800l-1 2z" fill="#d9bf7a"/><path d="M0 13.500c0-4 1.500-6 4.500-6s4.500 2 4.500 6z" fill="#7fb560"/><circle cx="10.800" cy="3.600" r="2.800" fill="#6b4a36"/><path d="M8 3a2.800 2.800 0 0 1 5.600 0l-2.800-0.600z" fill="#2b2b2b"/><path d="M6 13.500c0-4 1.800-6 4.800-6s5.200 2 5.200 6z" fill="#5b9bd8"/><path d="M9.500 7.800l1.300 2.200l1.300-2.200z" fill="#e8f0f8"/></svg>
<span class="a t" style="left:852.90px;top:531.50px;line-height:16px;font-size:13px;color:#000;transform:scaleX(0.8320);transform-origin:0 0;">IIS_IUSRS (DESKTOP-1FVAD59\IIS_IUSRS)</span>
<svg class="a" style="left:835px;top:549px;" width="16" height="14" viewBox="0 0 16 14" preserveAspectRatio="none"><circle cx="4.500" cy="3.200" r="2.700" fill="#e6cf9c"/><path d="M2 2.500a2.700 2.700 0 0 1 5-0.800l-1 2z" fill="#d9bf7a"/><path d="M0 13.500c0-4 1.500-6 4.500-6s4.500 2 4.500 6z" fill="#7fb560"/><circle cx="10.800" cy="3.600" r="2.800" fill="#6b4a36"/><path d="M8 3a2.800 2.800 0 0 1 5.600 0l-2.800-0.600z" fill="#2b2b2b"/><path d="M6 13.500c0-4 1.800-6 4.800-6s5.200 2 5.200 6z" fill="#5b9bd8"/><path d="M9.500 7.800l1.300 2.200l1.300-2.200z" fill="#e8f0f8"/></svg>
<span class="a t" style="left:852.90px;top:548.50px;line-height:16px;font-size:13px;color:#000;transform:scaleX(0.8080);transform-origin:0 0;">TrustedInstaller</span>
<div class="a" style="left:1131px;top:479px;width:17px;height:90px;background:#f0f0f0;"></div>
<svg class="a" style="left:1134.5px;top:485.5px;" width="8" height="6" viewBox="0 0 8 6" preserveAspectRatio="none"><path d="M0.500 4.500l3.500-3.500l3.500 3.500" fill="none" stroke="#585858" stroke-width="1.900"/></svg>
<svg class="a" style="left:1134.5px;top:557px;" width="8" height="6" viewBox="0 0 8 6" preserveAspectRatio="none"><path d="M0.500 1l3.500 3.500l3.500-3.500" fill="none" stroke="#585858" stroke-width="1.900"/></svg>
<div class="a" style="left:1131px;top:512px;width:15px;height:39px;background:#cdcdcd;"></div>
<div class="a" style="left:831px;top:569px;width:300px;height:17px;background:#f0f0f0;"></div>
<svg class="a" style="left:836px;top:572.5px;" width="6" height="8" viewBox="0 0 6 8" preserveAspectRatio="none"><path d="M4.500 0.500l-3.500 3.500l3.500 3.500" fill="none" stroke="#585858" stroke-width="1.900"/></svg>
<svg class="a" style="left:1119px;top:572.5px;" width="6" height="8" viewBox="0 0 6 8" preserveAspectRatio="none"><path d="M1 0.500l3.500 3.500l-3.500 3.500" fill="none" stroke="#585858" stroke-width="1.900"/></svg>
<div class="a" style="left:848px;top:569px;width:251px;height:15px;background:#cdcdcd;"></div>
<div class="a" style="left:1131px;top:569px;width:17px;height:17px;background:#f0f0f0;"></div>
<div class="a" style="left:993px;top:594px;width:73px;height:21px;background:#e1e1e1;border:1px solid #adadad;box-sizing:border-box;"></div>
<span class="a t" style="left:1006.00px;top:596.50px;line-height:16px;font-size:13px;color:#000;transform:scaleX(0.8107);transform-origin:0 0;">Agregar...</span>
<div class="a" style="left:1074px;top:594px;width:73px;height:21px;background:#e1e1e1;border:1px solid #adadad;box-sizing:border-box;"></div>
<span class="a t" style="left:1096.00px;top:596.50px;line-height:16px;font-size:13px;color:#000;transform:scaleX(0.8135);transform-origin:0 0;">Quitar</span>
<span class="a t" style="left:829.10px;top:627.50px;line-height:16px;font-size:13px;color:#000;transform:scaleX(0.8023);transform-origin:0 0;">Permisos de IIS_IUSRS</span>
<span class="a t" style="left:1034.90px;top:627.50px;line-height:16px;font-size:13px;color:#000;transform:scaleX(0.7504);transform-origin:0 0;">Permitir</span>
<span class="a t" style="left:1091.40px;top:627.50px;line-height:16px;font-size:13px;color:#000;transform:scaleX(0.8161);transform-origin:0 0;">Denegar</span>
<div class="a" style="left:829px;top:645px;width:320px;height:99px;background:#ffffff;border:1px solid #6e6e6e;box-sizing:border-box;"></div>
<div class="a" style="left:830px;top:646px;width:301px;height:97px;overflow:hidden;">
<span class="a t" style="left:11.00px;top:3.50px;line-height:16px;font-size:13px;color:#000;transform:scaleX(0.8017);transform-origin:0 0;">Control total</span>
<div class="a" style="left:210px;top:5px;width:13px;height:13px;background:#fff;border:1px solid #333;box-sizing:border-box;"></div>
<div class="a" style="left:270px;top:5px;width:13px;height:13px;background:#fff;border:1px solid #333;box-sizing:border-box;"></div>
<svg class="a" style="left:212px;top:8px;" width="9" height="7" viewBox="0 0 9 7" preserveAspectRatio="none"><path d="M0.500 3.500l2.800 2.800l5.200-5.800" fill="none" stroke="#222" stroke-width="1.100"/></svg>
<span class="a t" style="left:11.00px;top:21.50px;line-height:16px;font-size:13px;color:#000;transform:scaleX(0.8172);transform-origin:0 0;">Modificar</span>
<div class="a" style="left:210px;top:23px;width:13px;height:13px;background:#fff;border:1px solid #333;box-sizing:border-box;"></div>
<div class="a" style="left:270px;top:23px;width:13px;height:13px;background:#fff;border:1px solid #333;box-sizing:border-box;"></div>
<svg class="a" style="left:212px;top:26px;" width="9" height="7" viewBox="0 0 9 7" preserveAspectRatio="none"><path d="M0.500 3.500l2.800 2.800l5.200-5.800" fill="none" stroke="#222" stroke-width="1.100"/></svg>
<span class="a t" style="left:11.00px;top:39.50px;line-height:16px;font-size:13px;color:#000;transform:scaleX(0.8311);transform-origin:0 0;">Lectura y ejecución</span>
<div class="a" style="left:210px;top:41px;width:13px;height:13px;background:#fff;border:1px solid #333;box-sizing:border-box;"></div>
<div class="a" style="left:270px;top:41px;width:13px;height:13px;background:#fff;border:1px solid #333;box-sizing:border-box;"></div>
<svg class="a" style="left:212px;top:44px;" width="9" height="7" viewBox="0 0 9 7" preserveAspectRatio="none"><path d="M0.500 3.500l2.800 2.800l5.200-5.800" fill="none" stroke="#222" stroke-width="1.100"/></svg>
<span class="a t" style="left:11.00px;top:57.50px;line-height:16px;font-size:13px;color:#000;transform:scaleX(0.8201);transform-origin:0 0;">Mostrar el contenido de la carpeta</span>
<div class="a" style="left:210px;top:59px;width:13px;height:13px;background:#fff;border:1px solid #333;box-sizing:border-box;"></div>
<div class="a" style="left:270px;top:59px;width:13px;height:13px;background:#fff;border:1px solid #333;box-sizing:border-box;"></div>
<svg class="a" style="left:212px;top:62px;" width="9" height="7" viewBox="0 0 9 7" preserveAspectRatio="none"><path d="M0.500 3.500l2.800 2.800l5.200-5.800" fill="none" stroke="#222" stroke-width="1.100"/></svg>
<span class="a t" style="left:11.00px;top:75.50px;line-height:16px;font-size:13px;color:#000;transform:scaleX(0.8233);transform-origin:0 0;">Lectura</span>
<div class="a" style="left:210px;top:77px;width:13px;height:13px;background:#fff;border:1px solid #333;box-sizing:border-box;"></div>
<div class="a" style="left:270px;top:77px;width:13px;height:13px;background:#fff;border:1px solid #333;box-sizing:border-box;"></div>
<svg class="a" style="left:212px;top:80px;" width="9" height="7" viewBox="0 0 9 7" preserveAspectRatio="none"><path d="M0.500 3.500l2.800 2.800l5.200-5.800" fill="none" stroke="#222" stroke-width="1.100"/></svg>
<div class="a" style="left:210px;top:95px;width:13px;height:13px;background:#fff;border:1px solid #333;box-sizing:border-box;"></div>
<div class="a" style="left:270px;top:95px;width:13px;height:13px;background:#fff;border:1px solid #333;box-sizing:border-box;"></div>
<svg class="a" style="left:212px;top:98px;" width="9" height="7" viewBox="0 0 9 7" preserveAspectRatio="none"><path d="M0.500 3.500l2.800 2.800l5.200-5.800" fill="none" stroke="#222" stroke-width="1.100"/></svg>
</div>
<div class="a" style="left:1131px;top:646px;width:17px;height:97px;background:#f0f0f0;"></div>
<svg class="a" style="left:1134.5px;top:652.5px;" width="8" height="6" viewBox="0 0 8 6" preserveAspectRatio="none"><path d="M0.500 4.500l3.500-3.500l3.500 3.500" fill="none" stroke="#585858" stroke-width="1.900"/></svg>
<svg class="a" style="left:1134.5px;top:731px;" width="8" height="6" viewBox="0 0 8 6" preserveAspectRatio="none"><path d="M0.500 1l3.500 3.500l3.500-3.500" fill="none" stroke="#585858" stroke-width="1.900"/></svg>
<div class="a" style="left:1131px;top:664px;width:15px;height:46px;background:#cdcdcd;"></div>
<div class="a" style="left:1025px;top:622px;width:61px;height:127px;border:3px solid #fa0000;box-sizing:border-box;border-radius:3px;"></div>
<div class="a" style="left:927px;top:781px;width:73px;height:21px;background:#e1e1e1;border:1px solid #adadad;box-sizing:border-box;"></div>
<span class="a t" style="left:944.80px;top:783.50px;line-height:16px;font-size:13px;color:#000;transform:scaleX(0.8370);transform-origin:0 0;">Aceptar</span>
<div class="a" style="left:1008px;top:781px;width:73px;height:21px;background:#e1e1e1;border:1px solid #adadad;box-sizing:border-box;"></div>
<span class="a t" style="left:1023.00px;top:783.50px;line-height:16px;font-size:13px;color:#000;transform:scaleX(0.8111);transform-origin:0 0;">Cancelar</span>
<div class="a" style="left:1089px;top:781px;width:73px;height:21px;background:#cccccc;border:1px solid #bfbfbf;box-sizing:border-box;"></div>
<span class="a t" style="left:1108.70px;top:783.50px;line-height:16px;font-size:13px;color:#838383;transform:scaleX(0.8128);transform-origin:0 0;">Aplicar</span>
<div class="a" style="left:923px;top:775px;width:83px;height:33px;border:3px solid #fa0000;box-sizing:border-box;border-radius:3px;"></div>
</div>
</body></html>
